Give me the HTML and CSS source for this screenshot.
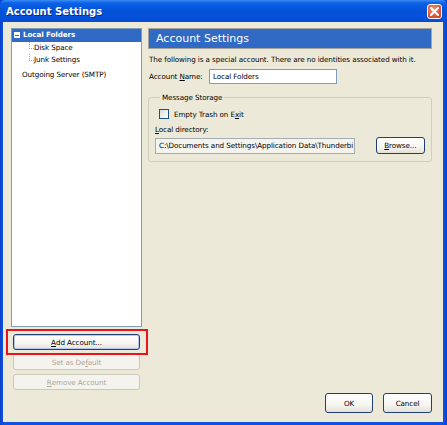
FILE: index.html
```html
<!DOCTYPE html>
<html>
<head>
<meta charset="utf-8">
<link rel="stylesheet" href="styles.css">
</head>
<body>
<div class="window">
  <div class="titlebar">
    <span class="title">Account Settings</span>
    <span class="close"><svg width="9" height="9" viewBox="0 0 9 9"><path d="M1 1L8 8M8 1L1 8" stroke="#fff" stroke-width="2" stroke-linecap="square"/></svg></span>
  </div>
  <div class="client">
    <div class="main">
      <div class="left">
        <div class="tree">
          <div class="row selected"><span class="minus"></span><b>Local Folders</b></div>
          <div class="row child"><span class="branch"></span>Disk Space</div>
          <div class="row child last"><span class="branch"></span>Junk Settings</div>
          <div class="row top">Outgoing Server (SMTP)</div>
        </div>
        <div class="leftbtns">
          <div class="highlight">
            <button class="btn wide"><u>A</u>dd Account...</button>
          </div>
          <button class="btn wide disabled">Set as De<u>f</u>ault</button>
          <button class="btn wide disabled"><u>R</u>emove Account</button>
        </div>
      </div>
      <div class="right">
        <div class="header">Account Settings</div>
        <p class="info">The following is a special account. There are no identities associated with it.</p>
        <div class="namerow">
          <span class="lbl">Account <u>N</u>ame:</span>
          <span class="field name">Local Folders</span>
        </div>
        <fieldset class="group">
          <legend>Message Storage</legend>
          <label class="check"><span class="box"></span>Empty Trash on E<u>x</u>it</label>
          <div class="dirlbl"><u>L</u>ocal directory:</div>
          <div class="dirrow">
            <span class="field dir"><span class="dirtext">C:\Documents and Settings\Application Data\Thunderbi</span></span>
            <button class="btn browse"><u>B</u>rowse...</button>
          </div>
        </fieldset>
      </div>
    </div>
    <div class="footer">
      <button class="btn ok">OK</button>
      <button class="btn cancel">Cancel</button>
    </div>
  </div>
</div>
</body>
</html>
```

FILE: styles.css
```css
* { box-sizing: border-box; }
html, body { margin: 0; padding: 0; }
body { width: 447px; height: 425px; overflow: hidden; font-family: "DejaVu Sans", Verdana, sans-serif; font-size: 7.2px; letter-spacing: -0.1px; color: #000; }

.window {
  width: 447px; height: 425px;
  background: linear-gradient(90deg, #0a3fc8 0, #0f52e0 3px, #0f52e0 444px, #0a3fc8 447px);
  display: flex; flex-direction: column;
}
.titlebar {
  height: 22px; flex: none;
  background: linear-gradient(180deg, #3b8cf5 0, #0b61e6 3px, #0453d8 10px, #0550da 18px, #0a4bcc 22px);
  border-radius: 5px 5px 0 0;
  display: flex; align-items: center; justify-content: space-between;
  padding: 0 5px 0 6px;
}
.title { color: #fff; font-weight: bold; font-size: 10px; letter-spacing: 0; text-shadow: 1px 1px 0 #0a2a8a; }
.close {
  width: 15px; height: 15px; border: 1px solid #fff; border-radius: 3px;
  background: radial-gradient(circle at 40% 35%, #f09a7a 0, #e0583a 55%, #c23c1e 100%);
  display: flex; align-items: center; justify-content: center;
}
.client {
  flex: 1; margin: 0 4px 3px 3px;
  background: #ece9d8;
  display: flex; flex-direction: column;
  padding: 6px 11px 9px 8px;
}
.main { flex: 1; display: flex; gap: 6px; }
.left { width: 131px; flex: none; display: flex; flex-direction: column; }
.tree { height: 299px; background: #fff; border: 1px solid #7f9db9; }
.row { height: 12.5px; line-height: 12.5px; display: flex; align-items: center; white-space: nowrap; }
.row.selected { background: #316ac5; color: #fff; padding-left: 2px; }
.row.selected b { font-weight: bold; margin-left: 3px; }
.minus { width: 6px; height: 6px; background: #fff; position: relative; flex: none; }
.minus::after { content: ""; position: absolute; left: 1px; top: 2.5px; width: 4px; height: 1px; background: #316ac5; }
.row.child { padding-left: 17px; }
.row.child:first-of-type { margin-top: 1px; }
.branch {
  width: 5px; height: 7px; border-left: 1px dotted #a0a0a0; border-bottom: 1px dotted #a0a0a0;
  align-self: flex-start;
}
.row.top { padding-left: 10px; margin-top: 2px; }

.leftbtns { display: flex; flex-direction: column; align-items: center; margin-top: 7px; gap: 4px; }
.highlight { position: relative; }
.highlight::before {
  content: ""; position: absolute; left: -7px; right: -8px; top: -5px; bottom: -5px;
  border: 2px solid #e8141c;
}
.btn {
  font-family: inherit; font-size: 7.2px; letter-spacing: -0.1px; color: #000;
  background: linear-gradient(180deg, #ffffff 0, #f6f5f0 60%, #e4e1d6 100%);
  border: 1px solid #1f3f77; border-radius: 3px; padding: 0; margin: 0;
  display: flex; align-items: center; justify-content: center;
}
.btn.wide { width: 127px; height: 16px; }
.btn.disabled { color: #aca899; border-color: #cac8bb; background: #f4f3ee; }
.highlight .btn { box-shadow: inset 0 0 0 1px #b4c8f0; }

.right { flex: 1; min-width: 0; display: flex; flex-direction: column; }
.header {
  height: 21px; background: #316ac5; color: #fff; font-size: 11px; letter-spacing: 0;
  border: 1px solid #a7a59b; padding-left: 7px; display: flex; align-items: center;
}
.info { margin: 6px 0 0 1px; line-height: 10px; white-space: nowrap; }
.namerow { display: flex; align-items: center; margin-top: 4px; }
.lbl { width: 61px; padding-left: 1px; }
.field {
  background: #fff; border: 1px solid #7f9db9; height: 15px; display: flex; align-items: center;
  padding-left: 3px; white-space: nowrap; overflow: hidden;
}
.field.name { width: 128px; }
.group {
  margin: 9px 0 0 0; padding: 0 6px 7px 6px; border: 1px solid #d0d0bf; border-radius: 3px;
  min-inline-size: 0;
}
.group legend { padding: 0 2px; margin-left: 5px; color: #000; }
.check { display: flex; align-items: center; margin-top: 7px; }
.box { width: 10px; height: 10px; border: 1px solid #1c5180; background: linear-gradient(135deg, #dcdcd7, #fff); margin-right: 5px; margin-left: 4px; }
.dirlbl { margin-top: 6px; }
.dirrow { display: flex; align-items: center; margin-top: 3px; }
.field.dir { width: 202px; height: 16px; background: #f4f3ee; border-color: #a5acb2; }
.dirtext { display: block; }
.btn.browse { width: 50px; height: 17px; margin-left: 21px; }

.footer { display: flex; justify-content: flex-end; gap: 10px; }
.btn.ok { width: 48px; height: 20px; }
.btn.cancel { width: 49px; height: 20px; }
```
